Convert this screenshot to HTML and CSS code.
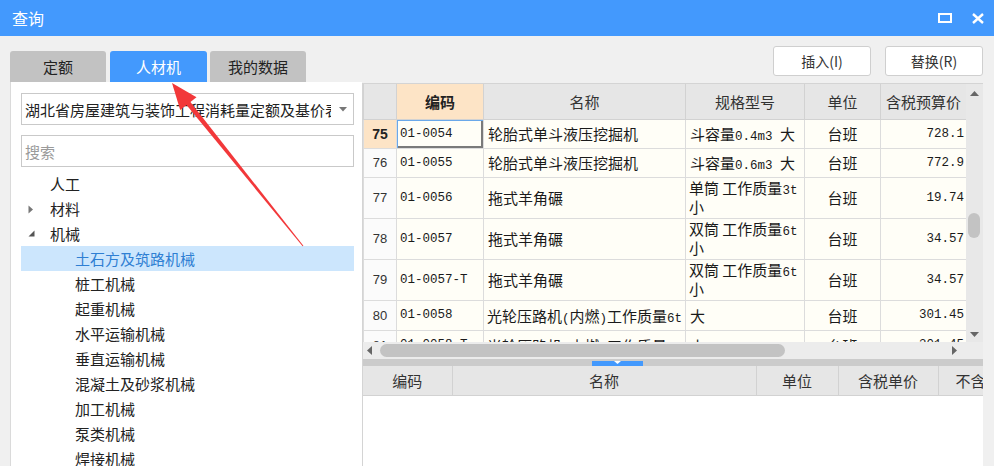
FILE: index.html
```html
<!DOCTYPE html>
<html lang="zh">
<head>
<meta charset="utf-8">
<title>查询</title>
<link rel="stylesheet" href="styles.css">
</head>
<body>
<div class="window">
  <div class="titlebar">
    <span class="title">查询</span>
    <div class="winctl">
      <svg width="14" height="10" viewBox="0 0 14 10"><rect x="1" y="1" width="12" height="8" fill="none" stroke="#fff" stroke-width="2"/></svg>
      <svg width="12" height="11" viewBox="0 0 12 11"><path d="M1 1 L11 10 M11 1 L1 10" stroke="#fff" stroke-width="2.4"/></svg>
    </div>
  </div>
  <div class="main">
    <div class="left">
      <div class="tabs">
        <div class="tab">定额</div>
        <div class="tab active">人材机</div>
        <div class="tab">我的数据</div>
      </div>
      <div class="tree-panel">
        <div class="select">
          <span class="select-text">湖北省房屋建筑与装饰工程消耗量定额及基价表</span>
          <svg class="select-arrow" width="8" height="5" viewBox="0 0 8 5"><path d="M0 0 L8 0 L4 4.5 Z" fill="#777"/></svg>
        </div>
        <div class="search">搜索</div>
        <ul class="tree">
          <li class="node lvl0"><span class="label">人工</span></li>
          <li class="node lvl0"><svg class="tw" width="6" height="9" viewBox="0 0 6 9"><path d="M0.5 0.5 L5 4.5 L0.5 8.5 Z" fill="#777"/></svg><span class="label">材料</span></li>
          <li class="node lvl0"><svg class="tw" width="7" height="7" viewBox="0 0 7 7"><path d="M6.5 0.5 L6.5 6.5 L0.5 6.5 Z" fill="#555"/></svg><span class="label">机械</span></li>
          <li class="node lvl1 selected"><span class="label">土石方及筑路机械</span></li>
          <li class="node lvl1"><span class="label">桩工机械</span></li>
          <li class="node lvl1"><span class="label">起重机械</span></li>
          <li class="node lvl1"><span class="label">水平运输机械</span></li>
          <li class="node lvl1"><span class="label">垂直运输机械</span></li>
          <li class="node lvl1"><span class="label">混凝土及砂浆机械</span></li>
          <li class="node lvl1"><span class="label">加工机械</span></li>
          <li class="node lvl1"><span class="label">泵类机械</span></li>
          <li class="node lvl1"><span class="label">焊接机械</span></li>
        </ul>
      </div>
    </div>
    <div class="right">
      <div class="toolbar">
        <button class="btn">插入(I)</button>
        <button class="btn">替换(R)</button>
      </div>
      <div class="grid-area">
        <div class="grid-top">
          <div class="tbl-wrap">
            <table class="grid">
              <colgroup><col style="width:33px"><col style="width:87px"><col style="width:202px"><col style="width:119px"><col style="width:76px"><col style="width:86px"></colgroup>
              <thead>
                <tr><th class="rn"></th><th class="hl">编码</th><th>名称</th><th>规格型号</th><th>单位</th><th>含税预算价</th></tr>
              </thead>
              <tbody>
                <tr class="r1"><td class="rn cur">75</td><td class="code focus">01-0054</td><td>轮胎式单斗液压挖掘机</td><td>斗容量<span class="m">0.4m3 </span>大</td><td class="c">台班</td><td class="num">728.1</td></tr>
                <tr class="r1"><td class="rn">76</td><td class="code">01-0055</td><td>轮胎式单斗液压挖掘机</td><td>斗容量<span class="m">0.6m3 </span>大</td><td class="c">台班</td><td class="num">772.9</td></tr>
                <tr class="r2"><td class="rn">77</td><td class="code">01-0056</td><td>拖式羊角碾</td><td class="two">单筒 工作质量<span class="m">3t</span><br>小</td><td class="c">台班</td><td class="num">19.74</td></tr>
                <tr class="r2"><td class="rn">78</td><td class="code">01-0057</td><td>拖式羊角碾</td><td class="two">双筒 工作质量<span class="m">6t</span><br>小</td><td class="c">台班</td><td class="num">34.57</td></tr>
                <tr class="r2"><td class="rn">79</td><td class="code">01-0057-T</td><td>拖式羊角碾</td><td class="two">双筒 工作质量<span class="m">6t</span><br>小</td><td class="c">台班</td><td class="num">34.57</td></tr>
                <tr class="r3"><td class="rn">80</td><td class="code">01-0058</td><td class="nw">光轮压路机<span class="m">(</span>内燃<span class="m">)</span>工作质量<span class="m">6t</span></td><td>大</td><td class="c">台班</td><td class="num">301.45</td></tr>
                <tr class="r3"><td class="rn">81</td><td class="code">01-0058-T</td><td class="nw">光轮压路机<span class="m">(</span>内燃<span class="m">)</span>工作质量<span class="m">6t</span></td><td>小</td><td class="c">台班</td><td class="num">301.45</td></tr>
              </tbody>
            </table>
          </div>
          <div class="vscroll">
            <svg class="sarrow" width="9" height="5" viewBox="0 0 9 5"><path d="M0 5 L4.5 0 L9 5 Z" fill="#666"/></svg>
            <div class="vthumb"></div>
            <svg class="sarrow down" width="9" height="5" viewBox="0 0 9 5"><path d="M0 0 L9 0 L4.5 5 Z" fill="#666"/></svg>
          </div>
        </div>
        <div class="hscroll">
          <svg width="5" height="9" viewBox="0 0 5 9"><path d="M5 0 L0 4.5 L5 9 Z" fill="#666"/></svg>
          <div class="hthumb"></div>
          <svg class="hright" width="5" height="9" viewBox="0 0 5 9"><path d="M0 0 L5 4.5 L0 9 Z" fill="#666"/></svg>
        </div>
        <div class="splitter">
          <div class="handle"><svg width="7" height="3" viewBox="0 0 7 3"><path d="M0 0 L7 0 L3.5 3 Z" fill="#fff"/></svg></div>
        </div>
        <div class="bottom">
          <table class="grid2">
            <colgroup><col style="width:89px"><col style="width:304px"><col style="width:82px"><col style="width:100px"><col style="width:100px"></colgroup>
            <thead><tr><th>编码</th><th>名称</th><th>单位</th><th>含税单价</th><th class="cut">不含税单价</th></tr></thead>
          </table>
        </div>
      </div>
    </div>
  </div>
  <svg class="annot" width="994" height="466" viewBox="0 0 994 466">
    <polygon points="303.4,245.7 302.6,246.3 182.6,100.2 186.5,97.0" fill="#f2383a"/>
    <polygon points="172,83 196.5,97.2 180.2,110" fill="#f2383a"/>
  </svg>
</div>
</body>
</html>
```

FILE: styles.css
```css
* { box-sizing: border-box; }
html, body { margin: 0; padding: 0; }
body {
  width: 994px;
  height: 466px;
  overflow: hidden;
  background: #f0f0f0;
  font-family: "Noto Sans CJK SC", "Liberation Sans", sans-serif;
  font-size: 15px;
  color: #222;
}
.window {
  position: relative;
  height: 466px;
  display: flex;
  flex-direction: column;
}
.titlebar {
  flex: none;
  height: 36px;
  background: #4399fd;
  color: #fff;
  display: flex;
  align-items: center;
  justify-content: space-between;
  padding: 0 10px 0 12px;
}
.title { font-size: 16px; }
.winctl { display: flex; align-items: center; gap: 20px; }
.winctl svg { display: block; }

.main {
  flex: 1;
  min-height: 0;
  display: flex;
  padding-left: 10px;
}
.left {
  width: 352px;
  display: flex;
  flex-direction: column;
}
.tabs {
  display: flex;
  gap: 4px;
  margin-top: 15px;
  height: 31px;
  flex: none;
}
.tab {
  width: 96px;
  background: #c2c2c2;
  border-radius: 3px 3px 0 0;
  display: flex;
  align-items: center;
  justify-content: center;
  color: #222;
}
.tab.active { background: #4399fd; color: #fff; width: 97px; margin-right: -1px; }
.tree-panel {
  flex: 1;
  background: #fff;
  border-left: 1px solid #dadada;
  padding: 11px 8px 0 10px;
  overflow: hidden;
}
.select {
  height: 32px;
  border: 1px solid #c9c9c9;
  display: flex;
  align-items: center;
  padding: 0 6px 0 3px;
  background: #fff;
}
.select-text {
  flex: 1;
  white-space: nowrap;
  overflow: hidden;
  color: #222;
}
.select-arrow { margin-left: 8px; flex: none; }
.search {
  margin-top: 10px;
  height: 32px;
  border: 1px solid #c9c9c9;
  padding-left: 3px;
  display: flex;
  align-items: center;
  color: #9a9a9a;
}
.tree {
  list-style: none;
  margin: 4px 0 0 0;
  padding: 0;
}
.node {
  height: 25px;
  display: flex;
  align-items: center;
  position: relative;
  white-space: nowrap;
}
.node.lvl0 { padding-left: 29px; }
.node.lvl1 { padding-left: 54px; }
.node .tw { position: absolute; left: 7px; top: 9px; }
.node.selected { background: #cce6fd; color: #2f7fd3; }

.right {
  width: 621px;
  display: flex;
  flex-direction: column;
}
.toolbar {
  flex: none;
  height: 30px;
  margin-top: 10px;
  display: flex;
  justify-content: flex-end;
  gap: 14px;
}
.btn {
  width: 98px;
  height: 30px;
  background: #fff;
  border: 1px solid #cfcfcf;
  border-radius: 3px;
  font-family: inherit;
  font-size: 14px;
  color: #333;
  padding: 0;
}
.grid-area {
  flex: 1;
  min-height: 0;
  margin-top: 7px;
  border-top: 1px solid #d4d4d4;
  border-left: 1px solid #d4d4d4;
  display: flex;
  flex-direction: column;
  background: #fff;
}
.grid-top {
  height: 258px;
  flex: none;
  display: flex;
}
.tbl-wrap {
  width: 603px;
  overflow: hidden;
  background: #fff;
}
.grid, .grid2 {
  border-collapse: collapse;
  table-layout: fixed;
}
.grid { width: 603px; }
.grid th {
  height: 35px;
  background: #e6e6e6;
  border: 1px solid #d2d2d2;
  border-top: none;
  font-weight: normal;
  color: #333;
  padding: 0;
}
.grid th.hl { background: #fde4c6; font-weight: bold; color: #222; }
.grid td {
  border: 1px solid #dcdcdc;
  background: #fffef7;
  padding: 0 4px;
  white-space: nowrap;
  overflow: hidden;
  vertical-align: middle;
  color: #1a1a1a;
}
.grid tr.r1 td { height: 29px; }
.grid tr.r2 td { height: 41px; }
.grid tr.r3 td { height: 30px; }
.grid td.rn {
  background: #fbfbfb;
  text-align: center;
  font-family: "Liberation Sans", sans-serif;
  font-size: 13px;
  color: #333;
  padding: 0;
}
.grid td.rn.cur { background: #fde4c6; font-weight: bold; font-size: 14px; color: #222; }
.grid td.code, .grid td.num, .m {
  font-family: "Liberation Mono", "Noto Sans CJK SC", monospace;
  font-size: 12.5px;
}
.grid td.code { padding-left: 3px; }
.grid td.num { text-align: right; padding-right: 2px; }
.grid td.c { text-align: center; }
.grid td.two { line-height: 16px; white-space: normal; padding-left: 3px; }
.grid td.focus {
  box-shadow: inset 1px 1px 0 #6aa8ea, inset -2px -2px 0 #7a7a7a;
}
.grid td.nw { padding-left: 3px; text-overflow: clip; }
.vscroll {
  width: 17px;
  flex: none;
  background: #e8e8e8;
  position: relative;
}
.sarrow { position: absolute; left: 4px; top: 7px; }
.sarrow.down { top: auto; bottom: 5px; }
.vthumb {
  position: absolute;
  left: 2px;
  top: 129px;
  width: 12px;
  height: 25px;
  border-radius: 6px;
  background: #c3c3c3;
}
.hscroll {
  flex: none;
  height: 17px;
  background: #ececec;
  display: flex;
  align-items: center;
  padding-left: 4px;
}
.hthumb {
  width: 405px;
  height: 13px;
  margin-left: 8px;
  border-radius: 7px;
  background: #c3c3c3;
}
.hright { margin-left: 167px; }
.splitter {
  flex: none;
  height: 7px;
  background: #cbcbcb;
  padding-left: 229px;
  padding-top: 2px;
}
.handle {
  width: 51px;
  height: 5px;
  background: #4399fd;
  display: flex;
  justify-content: center;
}
.handle svg { display: block; }
.bottom {
  flex: 1;
  background: #fff;
  overflow: hidden;
}
.grid2 { width: 675px; }
.grid2 th {
  height: 29px;
  background: #e6e6e6;
  border-right: 1px solid #d2d2d2;
  border-bottom: 1px solid #d2d2d2;
  font-weight: normal;
  color: #333;
  padding: 0;
  white-space: nowrap;
  overflow: hidden;
}
.grid2 th.cut { text-align: left; padding-left: 17px; }
.annot {
  position: absolute;
  left: 0;
  top: 0;
  pointer-events: none;
}
```
